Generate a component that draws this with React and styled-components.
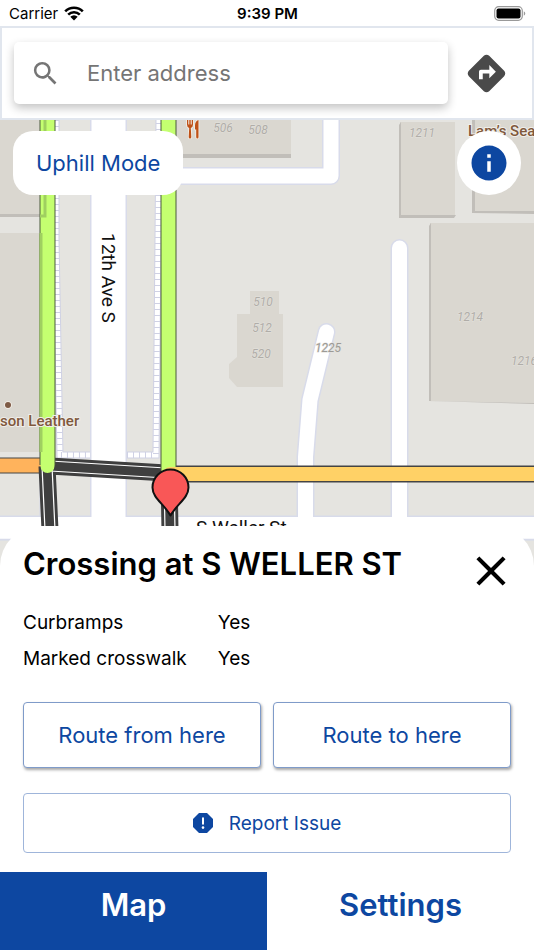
import React, { useState } from "react";
import styled, { createGlobalStyle, css } from "styled-components";
import { MdSearch, MdDirections, MdInfo, MdClose } from "react-icons/md";

const BLUE = "#0d47a1";

const buildings = [
  "M0 120H46V215H0Z",
  "M0 233H40V452H0Z",
  "M176 120H291V156H176Z",
  "M400 122H455V216H400Z",
  "M474 120H534V212H474Z",
  "M430 223H534V403L430 401Z",
  "M250 291H279V314H283V387H237L229 378V364L237 357V314H250Z",
];

// darker edges on the west and south side of the blocks
const shades = [
  "M0 214H44V120H47V217H0Z",
  "M39 234L42 233V452H39Z",
  "M176 154H291V158H176Z",
  "M399 125L401 122V215H456L454 218H399Z",
  "M472 120H475V211H534V214L472 213Z",
  "M429 226L431 223V401L534 403V404L429 401Z",
];

const roads = [
  "M108.500 110V530",
  "M0 528H534",
  "M170 176H331V110",
  "M399.500 530V248",
  "M305.500 530V457L310 400L326.500 332",
];

const houseNumbers = [
  { x: 223, y: 132, n: "506" },
  { x: 258, y: 134, n: "508" },
  { x: 422, y: 137, n: "1211" },
  { x: 263, y: 306, n: "510" },
  { x: 262, y: 332, n: "512" },
  { x: 261, y: 358, n: "520" },
  { x: 470, y: 321, n: "1214" },
  { x: 524, y: 365, n: "1216" },
];

const App = () => {
  const [tab, setTab] = useState("map");

  return (
    <>
      <GlobalStyle />
      <Page>
        <StatusBar />
        <SearchBar />
        <MapArea>
          <CityMap />
          <MapControls>
            <ModeButton type="button">Uphill Mode</ModeButton>
            <InfoButton type="button" aria-label="Information">
              <MdInfo size={42} />
            </InfoButton>
          </MapControls>
        </MapArea>
        <CrossingSheet />
        <Tabs>
          <Tab type="button" $active={tab === "map"} onClick={() => setTab("map")}>
            Map
          </Tab>
          <Tab type="button" $active={tab === "settings"} onClick={() => setTab("settings")}>
            Settings
          </Tab>
        </Tabs>
      </Page>
    </>
  );
};

const StatusBar = () => (
  <Status>
    <Carrier>
      Carrier
      <svg width="20" height="15" viewBox="0 0 20 15" aria-hidden="true">
        <path d="M1.200 5.400a12.500 12.500 0 0 1 17.600 0M4.200 8.600a8.300 8.300 0 0 1 11.600 0" fill="none" stroke="#000" strokeWidth="2.600" />
        <path d="M6.300 10.700a5.300 5.300 0 0 1 7.400 0L10 14.500Z" />
      </svg>
    </Carrier>
    <Clock>9:39 PM</Clock>
    <Battery>
      <svg width="32" height="15" viewBox="0 0 32 15" aria-hidden="true">
        <rect x="0.700" y="0.700" width="27.600" height="13.600" rx="4" fill="#fff" stroke="#999" strokeWidth="1.200" />
        <rect x="2.500" y="2.500" width="24" height="10" rx="2" />
        <path d="M29.800 5.300c2 .9 2 3.500 0 4.400Z" fill="#999" />
      </svg>
    </Battery>
  </Status>
);

const SearchBar = () => (
  <Header>
    <SearchBox>
      <MdSearch size={31} color="#757575" />
      <SearchInput type="text" placeholder="Enter address" aria-label="Enter address" />
    </SearchBox>
    <DirectionsButton type="button" aria-label="Directions">
      <MdDirections size={45} />
    </DirectionsButton>
  </Header>
);

const CityMap = () => (
  <MapSvg viewBox="0 120 534 446" preserveAspectRatio="xMidYMin slice" role="img" aria-label="Map of 12th Ave S">
    <rect y="120" width="534" height="446" fill="#e5e4e0" />
    <g fill="#dad7d0">
      {buildings.map((d) => (
        <path key={d} d={d} />
      ))}
    </g>
    <g fill="#c1beb9">
      {shades.map((d) => (
        <path key={d} d={d} />
      ))}
    </g>

    {/* sidewalks */}
    <g fill="none">
      <path d="M56 120V240L60 455H90M127 455H156L158 240L159 120" stroke="#cfd1e4" strokeWidth="7" />
      <path d="M56 120V240L60 455H90M127 455H156L158 240L159 120" stroke="#fff" strokeWidth="5" />
      <path d="M56 120V240L60 455H90M127 455H156L158 240L159 120" stroke="#cfd1e4" strokeWidth="6" strokeDasharray="1 5" />
      <path d="M40 452V516" stroke="#d5d8e8" strokeWidth="1" />
    </g>

    {/* streets, casing first */}
    <g fill="none" strokeLinecap="round" strokeLinejoin="round">
      {roads.map((d, i) => (
        <path key={d} d={d} stroke="#d8dbea" strokeWidth={i === 0 ? 37 : i === 1 ? 25 : 18} />
      ))}
      {roads.map((d, i) => (
        <path key={d} d={d} stroke="#fff" strokeWidth={i === 0 ? 34 : i === 1 ? 22 : 15} />
      ))}
    </g>

    {/* accessible routes */}
    <g fill="none">
      <path d="M0 465.500H47" stroke="#444" strokeWidth="16" />
      <path d="M0 465.500H47" stroke="#ffb35c" strokeWidth="14" />
      <path d="M47 466L50 530M169 475L170 530M50 466L166 473" stroke="#3f3f3f" strokeWidth="17" />
      <path d="M42 466L45 530M52 466L55 530M164 475L165 530M174 475L175 530M50 461L166 468M50 471L166 478" stroke="#fff" strokeWidth="1.200" />
      <path d="M169 474H534" stroke="#444" strokeWidth="17" />
      <path d="M47.500 110V465" stroke="#4b5a3c" strokeWidth="16" />
      <path d="M168.500 110V470" stroke="#4b5a3c" strokeWidth="16" />
      <path d="M47.500 110V466M168.500 110V472" stroke="#c4ff70" strokeWidth="14" strokeLinecap="round" />
      <path d="M170 474H534" stroke="#ffd166" strokeWidth="14" />
      <path d="M170 474H171" stroke="#ffd166" strokeWidth="14" strokeLinecap="round" />
      <path d="M45 120V216H40M41 233V452" stroke="#9fcf60" strokeWidth="3" />
    </g>

    <HouseNumbers>
      {houseNumbers.map((h) => (
        <text key={h.n} x={h.x} y={h.y}>
          {h.n}
        </text>
      ))}
      <DarkNumber x="328" y="352">1225</DarkNumber>
    </HouseNumbers>

    <g fill="#bf5117" stroke="#f6f1ea" strokeWidth="1.500" paintOrder="stroke">
      <path d="M187 120v4.500q0 3 2.200 3.500l-.5 9q0 1.500 1.300 1.500t1.300-1.500l-.5-9q2.200-.5 2.200-3.500V120h-1.300v4.500h-1V120h-1.400v4.500h-1V120Z" />
      <path d="M198.500 120q-3.500 1-3.500 5.500v4h1.200v7.500q0 1.500 1.200 1.500t1.100-1.500Z" />
      <circle cx="8" cy="405" r="3" fill="#7d5a45" />
    </g>
    <PlaceLabel x="468" y="136">Lam’s Sea</PlaceLabel>
    <PlaceLabel x="0" y="426">son Leather</PlaceLabel>
    <StreetLabel transform="translate(102 233) rotate(90)">12th Ave S</StreetLabel>
    <StreetLabel x="196" y="534">S Weller St</StreetLabel>

    <path
      d="M170.500 515.500C164 504 152.500 498 152.500 487.500a18 18 0 0 1 36 0C188.500 498 177 504 170.500 515.500Z"
      fill="#f95757"
      stroke="#111"
      strokeWidth="2"
      strokeLinejoin="round"
    />
    <path d="M0 539.500H534" stroke="#d8dbea" strokeWidth="1.500" />
  </MapSvg>
);

const CrossingSheet = () => (
  <Sheet>
    <SheetHead>
      <Title>Crossing at S WELLER ST</Title>
      <CloseButton type="button" aria-label="Close">
        <MdClose size={50} />
      </CloseButton>
    </SheetHead>
    <Details>
      <tbody>
        <tr>
          <th scope="row">Curbramps</th>
          <td>Yes</td>
        </tr>
        <tr>
          <th scope="row">Marked crosswalk</th>
          <td>Yes</td>
        </tr>
      </tbody>
    </Details>
    <RouteButtons>
      <OutlineButton type="button" $raised>Route from here</OutlineButton>
      <OutlineButton type="button" $raised>Route to here</OutlineButton>
    </RouteButtons>
    <OutlineButton type="button">
      <svg width="20" height="20" viewBox="0 0 20 20" aria-hidden="true">
        <path d="M6 0h8l6 6v8l-6 6H6l-6-6V6Z" fill={BLUE} />
        <path d="M10 5.200v5.600" stroke="#fff" strokeWidth="2" strokeLinecap="round" />
        <circle cx="10" cy="14.600" r="1.300" fill="#fff" />
      </svg>
      Report Issue
    </OutlineButton>
  </Sheet>
);

const GlobalStyle = createGlobalStyle`
  * {
    box-sizing: border-box;
  }
  body {
    margin: 0;
    background: #fff;
    color: #000;
    font-family: Inter, "Liberation Sans", sans-serif;
  }
  button {
    margin: 0;
    padding: 0;
    border: none;
    font-family: inherit;
    cursor: pointer;
  }
  svg {
    display: block;
    flex-shrink: 0;
  }
`;

const Page = styled.div`
  display: flex;
  flex-direction: column;
  min-height: 100vh;
`;

const Status = styled.div`
  display: grid;
  grid-template-columns: 1fr auto 1fr;
  align-items: center;
  height: 26px;
  padding: 0 8px 0 9px;
  font-size: 15px;
`;

const Carrier = styled.div`
  display: flex;
  align-items: center;
  gap: 6px;
`;

const Clock = styled.div`
  font-weight: 600;
`;

const Battery = styled.div`
  justify-self: end;
`;

const Header = styled.header`
  display: flex;
  align-items: center;
  gap: 16px;
  height: 94px;
  padding: 0 23px 0 12px;
  border: 2px solid #e1e6ee;
`;

const SearchBox = styled.label`
  display: flex;
  flex: 1;
  align-items: center;
  gap: 26px;
  min-width: 0;
  height: 62px;
  padding: 0 16px;
  border-radius: 5px;
  background: #fff;
  box-shadow: 0 4px 10px rgba(0, 0, 0, 0.24);
`;

const SearchInput = styled.input`
  flex: 1;
  min-width: 0;
  padding: 0;
  border: none;
  outline: none;
  background: transparent;
  font-family: inherit;
  font-size: 22px;

  &::placeholder {
    color: #757575;
    opacity: 1;
  }
`;

const DirectionsButton = styled.button`
  background: none;
  color: #4a4a4a;
`;

const MapArea = styled.main`
  display: grid;
  flex: 1 0 446px;
  grid-template-rows: minmax(0, 1fr);
`;

const MapSvg = styled.svg`
  grid-area: 1 / 1;
  width: 100%;
  height: 100%;
`;

const HouseNumbers = styled.g`
  fill: #b0ada8;
  font-family: Roboto, sans-serif;
  font-size: 12px;
  font-style: italic;
  text-anchor: middle;
  paint-order: stroke;
  stroke: #e4e2dd;
  stroke-width: 1px;
`;

const DarkNumber = styled.text`
  fill: #9c9a96;
`;

const PlaceLabel = styled.text`
  fill: #7f583c;
  font-family: Roboto, sans-serif;
  font-size: 15px;
  font-weight: 500;
  paint-order: stroke;
  stroke: #f0eeea;
  stroke-width: 2px;
`;

const StreetLabel = styled.text`
  fill: #111;
  font-family: Roboto, sans-serif;
  font-size: 19px;
`;

const MapControls = styled.div`
  display: flex;
  grid-area: 1 / 1;
  align-items: flex-start;
  justify-content: space-between;
  padding: 11px 13px;
  z-index: 1;
`;

const ModeButton = styled.button`
  height: 64px;
  padding: 0 23px;
  border-radius: 20px;
  background: #fff;
  color: ${BLUE};
  font-size: 22px;
`;

const InfoButton = styled.button`
  display: grid;
  place-items: center;
  width: 64px;
  height: 64px;
  border-radius: 50%;
  background: #fff;
  color: ${BLUE};
`;

const Sheet = styled.section`
  display: flex;
  flex-direction: column;
  margin-top: -40px;
  padding: 18px 23px 19px;
  border-radius: 40px 40px 0 0;
  background: #fff;
  z-index: 1;
`;

const SheetHead = styled.div`
  display: flex;
  align-items: flex-start;
  justify-content: space-between;
  margin-bottom: 9px;
`;

const Title = styled.h1`
  margin: 0;
  font-size: 31px;
  font-weight: 600;
  line-height: 40px;
`;

const CloseButton = styled.button`
  margin: 2px -5px 0 0;
  background: none;
  color: #000;
`;

const Details = styled.table`
  align-self: flex-start;
  margin-bottom: 25px;
  border-collapse: collapse;
  font-size: 19px;
  line-height: 36px;

  th {
    padding: 0 31px 0 0;
    font-weight: 400;
    text-align: left;
  }
  td {
    padding: 0;
  }
`;

const RouteButtons = styled.div`
  display: grid;
  grid-template-columns: 1fr 1fr;
  gap: 12px;
  margin-bottom: 25px;
`;

const OutlineButton = styled.button`
  display: flex;
  align-items: center;
  justify-content: center;
  gap: 16px;
  height: 60px;
  border: 1px solid #9fb5da;
  border-radius: 4px;
  background: #fff;
  color: ${BLUE};
  font-size: 19px;

  ${({ $raised }) =>
    $raised &&
    css`
      height: 66px;
      border-color: #7f9bc9;
      box-shadow: 1px 2px 3px rgba(0, 0, 0, 0.35);
      font-size: 22px;
    `}
`;

const Tabs = styled.nav`
  display: grid;
  grid-template-columns: 1fr 1fr;
`;

const Tab = styled.button`
  height: 78px;
  padding-bottom: 14px;
  background: ${({ $active }) => ($active ? BLUE : "#fff")};
  color: ${({ $active }) => ($active ? "#fff" : BLUE)};
  font-size: 31px;
  font-weight: 600;
`;

export default App;
